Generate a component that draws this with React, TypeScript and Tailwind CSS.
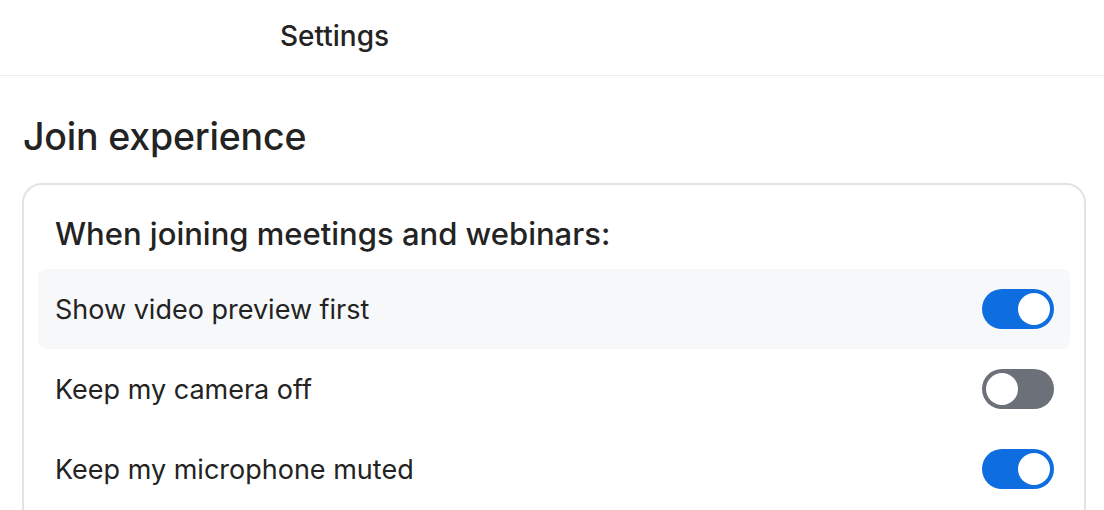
import { useState } from "react";

type Option = {
  id: string;
  label: string;
  on: boolean;
};

const initialOptions: Option[] = [
  { id: "preview", label: "Show video preview first", on: true },
  { id: "camera", label: "Keep my camera off", on: false },
  { id: "mic", label: "Keep my microphone muted", on: true },
];

function Toggle({ on, onClick }: { on: boolean; onClick: () => void }) {
  return (
    <button
      onClick={onClick}
      className={`flex h-10 w-[72px] shrink-0 items-center rounded-full p-1 ${
        on ? "justify-end bg-[#0e6ee0]" : "justify-start bg-[#6b7079]"
      }`}
    >
      <span className="block h-8 w-8 rounded-full bg-white" />
    </button>
  );
}

export default function App() {
  const [options, setOptions] = useState<Option[]>(initialOptions);

  const toggle = (id: string) => {
    setOptions((prev) =>
      prev.map((o) => (o.id === id ? { ...o, on: !o.on } : o))
    );
  };

  return (
    <div className="h-[510px] overflow-hidden bg-white text-[#232323] font-['Inter','Noto_Sans',sans-serif]">
      <header className="flex h-[76px] items-center border-b-[1.5px] border-[#ececec] pb-1 pl-[280px]">
        <span className="text-[28px] font-medium">Settings</span>
      </header>

      <main className="pl-[22px] pr-[18px]">
        <h1 className="mt-[37px] pl-px text-[37.5px] font-medium leading-[48px] tracking-[-0.2px]">
          Join experience
        </h1>

        <section className="mt-[22px] rounded-[20px] border-2 border-[#e3e3e5] px-[14px] pb-10 pt-[29px]">
          <h2 className="pl-[17px] text-[31px] font-medium leading-[40px]">
            When joining meetings and webinars:
          </h2>

          <ul className="mt-[15px]">
            {options.map((o, i) => (
              <li
                key={o.id}
                className={`flex h-20 items-center justify-between rounded-lg pl-[17px] pr-4 ${
                  i === 0 ? "bg-[#f7f8fa]" : ""
                }`}
              >
                <span className="pt-[3px] text-[27px]">{o.label}</span>
                <Toggle on={o.on} onClick={() => toggle(o.id)} />
              </li>
            ))}
          </ul>
        </section>
      </main>
    </div>
  );
}
